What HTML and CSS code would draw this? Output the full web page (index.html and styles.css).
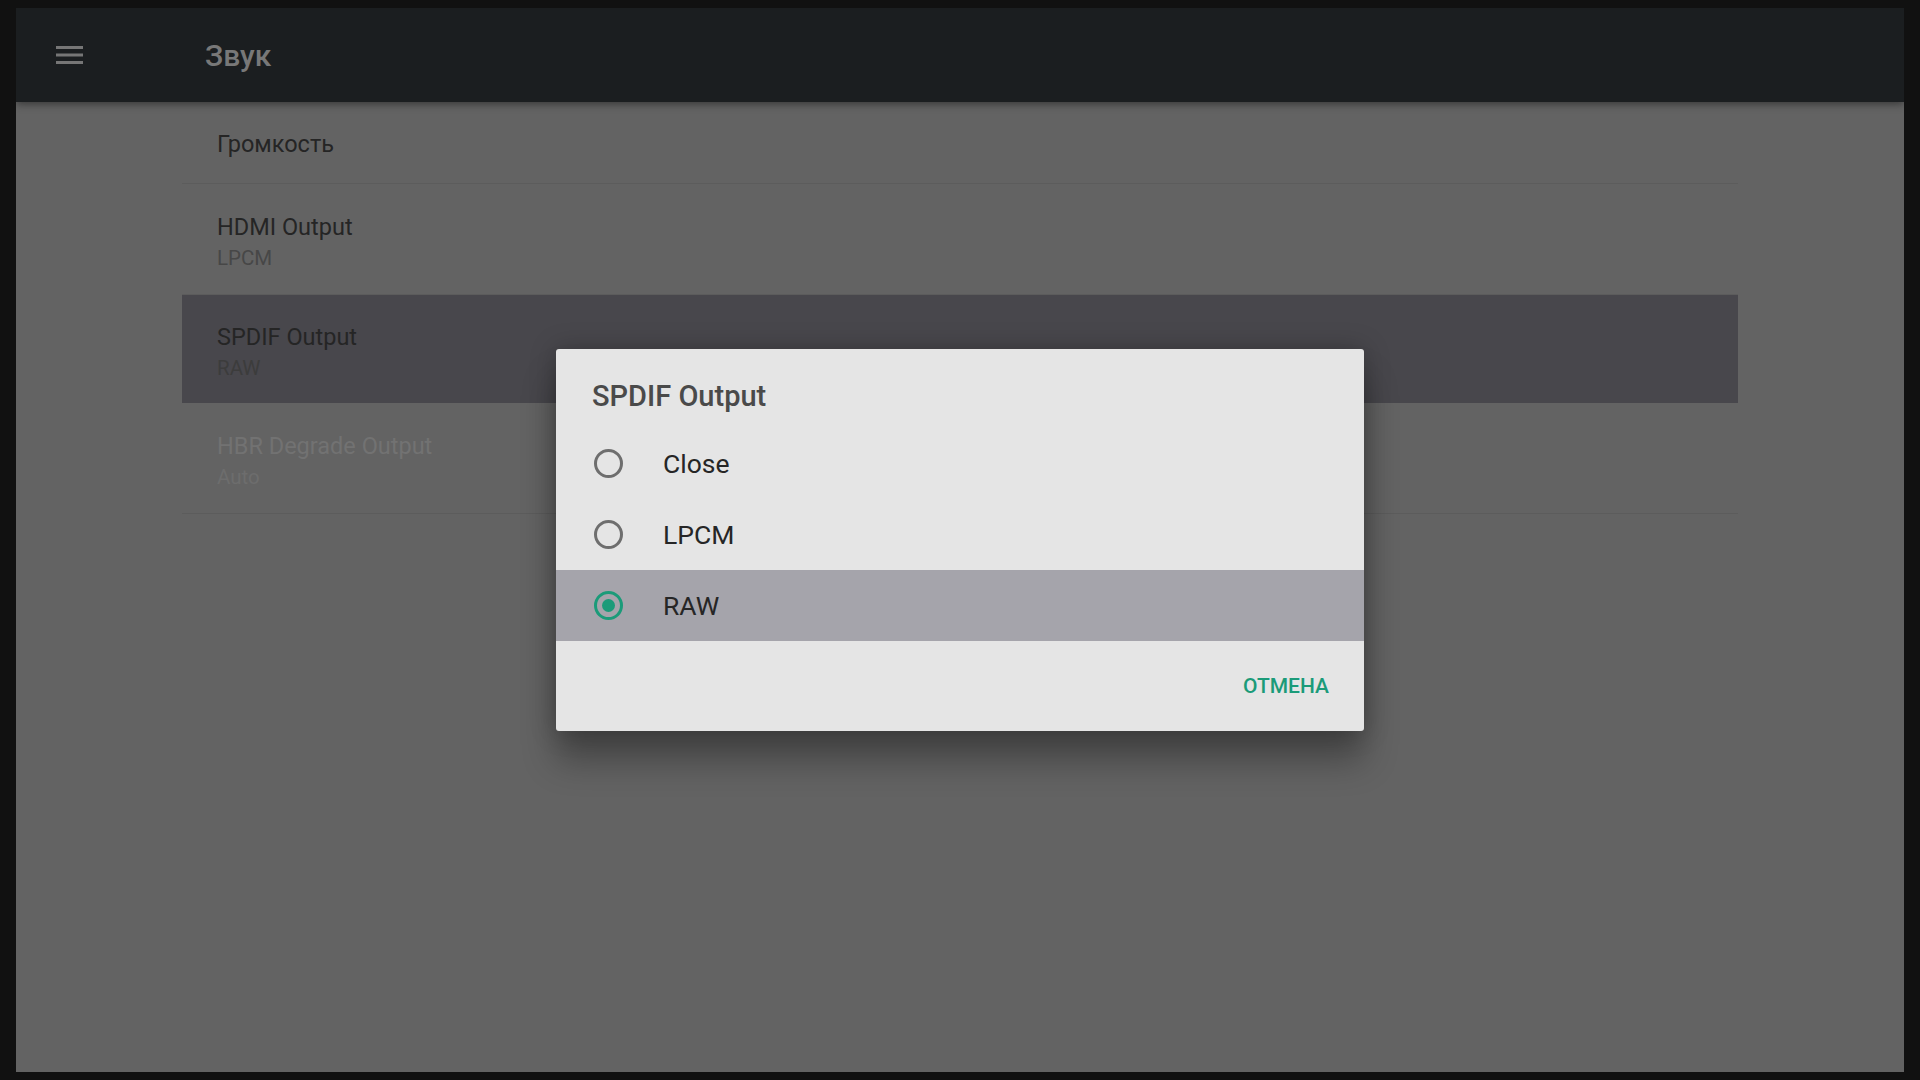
FILE: index.html
```html
<!DOCTYPE html>
<html lang="ru">
<head>
    <meta charset="UTF-8">
    <title>Звук</title>
    <link rel="stylesheet" href="styles.css">
</head>
<body>

    <div class="screen">
        <header class="toolbar">
            <svg class="menu-icon" width="27" height="18" viewBox="0 0 27 18">
                <path d="M0 1.5h27M0 9h27M0 16.5h27" stroke="#767676" stroke-width="3" fill="none"/>
            </svg>
            <h1 class="toolbar-title">Звук</h1>
        </header>

        <!-- Preferences -->
        <ul class="pref-list">
            <li class="pref-item single">
                <div class="pref-title">Громкость</div>
            </li>
            <li class="pref-item">
                <div class="pref-title">HDMI Output</div>
                <div class="pref-summary">LPCM</div>
            </li>
            <li class="pref-item focused">
                <div class="pref-title">SPDIF Output</div>
                <div class="pref-summary">RAW</div>
            </li>
            <li class="pref-item disabled">
                <div class="pref-title">HBR Degrade Output</div>
                <div class="pref-summary">Auto</div>
            </li>
        </ul>

        <!-- Choice dialog -->
        <div class="scrim">
            <div class="dialog">
                <h2 class="dialog-title">SPDIF Output</h2>
                <div class="choice">
                    <span class="radio"></span>
                    <span class="choice-label">Close</span>
                </div>
                <div class="choice">
                    <span class="radio"></span>
                    <span class="choice-label">LPCM</span>
                </div>
                <div class="choice selected">
                    <span class="radio checked"></span>
                    <span class="choice-label">RAW</span>
                </div>
                <div class="dialog-actions">
                    <button class="action-btn">ОТМЕНА</button>
                </div>
            </div>
        </div>
    </div>

</body>
</html>
```

FILE: styles.css
```css
body {
    margin: 0;
    padding: 8px 16px;
    background: #111;
    font-family: Roboto, "Noto Sans", sans-serif;
}

.screen {
    position: relative;
    height: 1064px;
    background: #636363;
    overflow: hidden;
}

.toolbar {
    position: relative;
    z-index: 1;
    display: flex;
    align-items: center;
    height: 94px;
    padding-left: 40px;
    background: #1b1e20;
    box-shadow: 0 2px 8px rgba(0, 0, 0, 0.45);
}

.menu-icon {
    display: block;
}

.toolbar-title {
    margin: 0 0 0 122px;
    font-size: 30px;
    font-weight: 500;
    color: #787878;
}

.pref-list {
    width: 1556px;
    margin: 0 auto;
    padding: 0;
    list-style: none;
}

.pref-item {
    display: flex;
    flex-direction: column;
    justify-content: center;
    height: 104px;
    padding: 6px 0 0 35px;
    border-bottom: 1px solid #5c5c5c;
    box-sizing: content-box;
}

.pref-item.single {
    height: 78px;
    padding-top: 3px;
}

.pref-item.focused {
    height: 101px;
    background: #48474c;
    border-bottom-color: #48474c;
}

.pref-title {
    font-size: 23.5px;
    line-height: 30px;
    color: #252525;
}

.pref-summary {
    padding-top: 2px;
    font-size: 20.5px;
    line-height: 28px;
    color: #474747;
}

.focused .pref-summary {
    color: #3c3c3c;
}

.disabled .pref-title {
    color: #727272;
}

.disabled .pref-summary {
    color: #6d6d6d;
}

.scrim {
    position: absolute;
    inset: 0;
    display: flex;
    align-items: center;
    justify-content: center;
}

.dialog {
    width: 808px;
    background: #e5e5e5;
    border-radius: 3px;
    box-shadow: 0 30px 34px rgba(0, 0, 0, 0.3), 0 0 26px rgba(0, 0, 0, 0.25);
}

.dialog-title {
    margin: 0;
    padding: 29px 36px 14px;
    font-size: 29px;
    line-height: 36px;
    font-weight: 500;
    color: #4a4a4a;
}

.choice {
    display: flex;
    align-items: center;
    height: 71px;
    padding-left: 38px;
}

.choice.selected {
    background: #a5a4ab;
}

.radio {
    display: flex;
    align-items: center;
    justify-content: center;
    width: 29px;
    height: 29px;
    box-sizing: border-box;
    border: 3px solid #6e6e6e;
    border-radius: 50%;
}

.radio.checked {
    border-color: #1b9b79;
}

.radio.checked::after {
    content: "";
    width: 13px;
    height: 13px;
    border-radius: 50%;
    background: #1b9b79;
}

.choice-label {
    margin-left: 40px;
    font-size: 26.5px;
    color: #262626;
}

.dialog-actions {
    display: flex;
    align-items: center;
    justify-content: flex-end;
    height: 90px;
    padding-right: 35px;
}

.action-btn {
    padding: 0;
    border: none;
    background: none;
    font-family: inherit;
    font-size: 21px;
    font-weight: 500;
    color: #1b9b79;
    cursor: pointer;
}
```
